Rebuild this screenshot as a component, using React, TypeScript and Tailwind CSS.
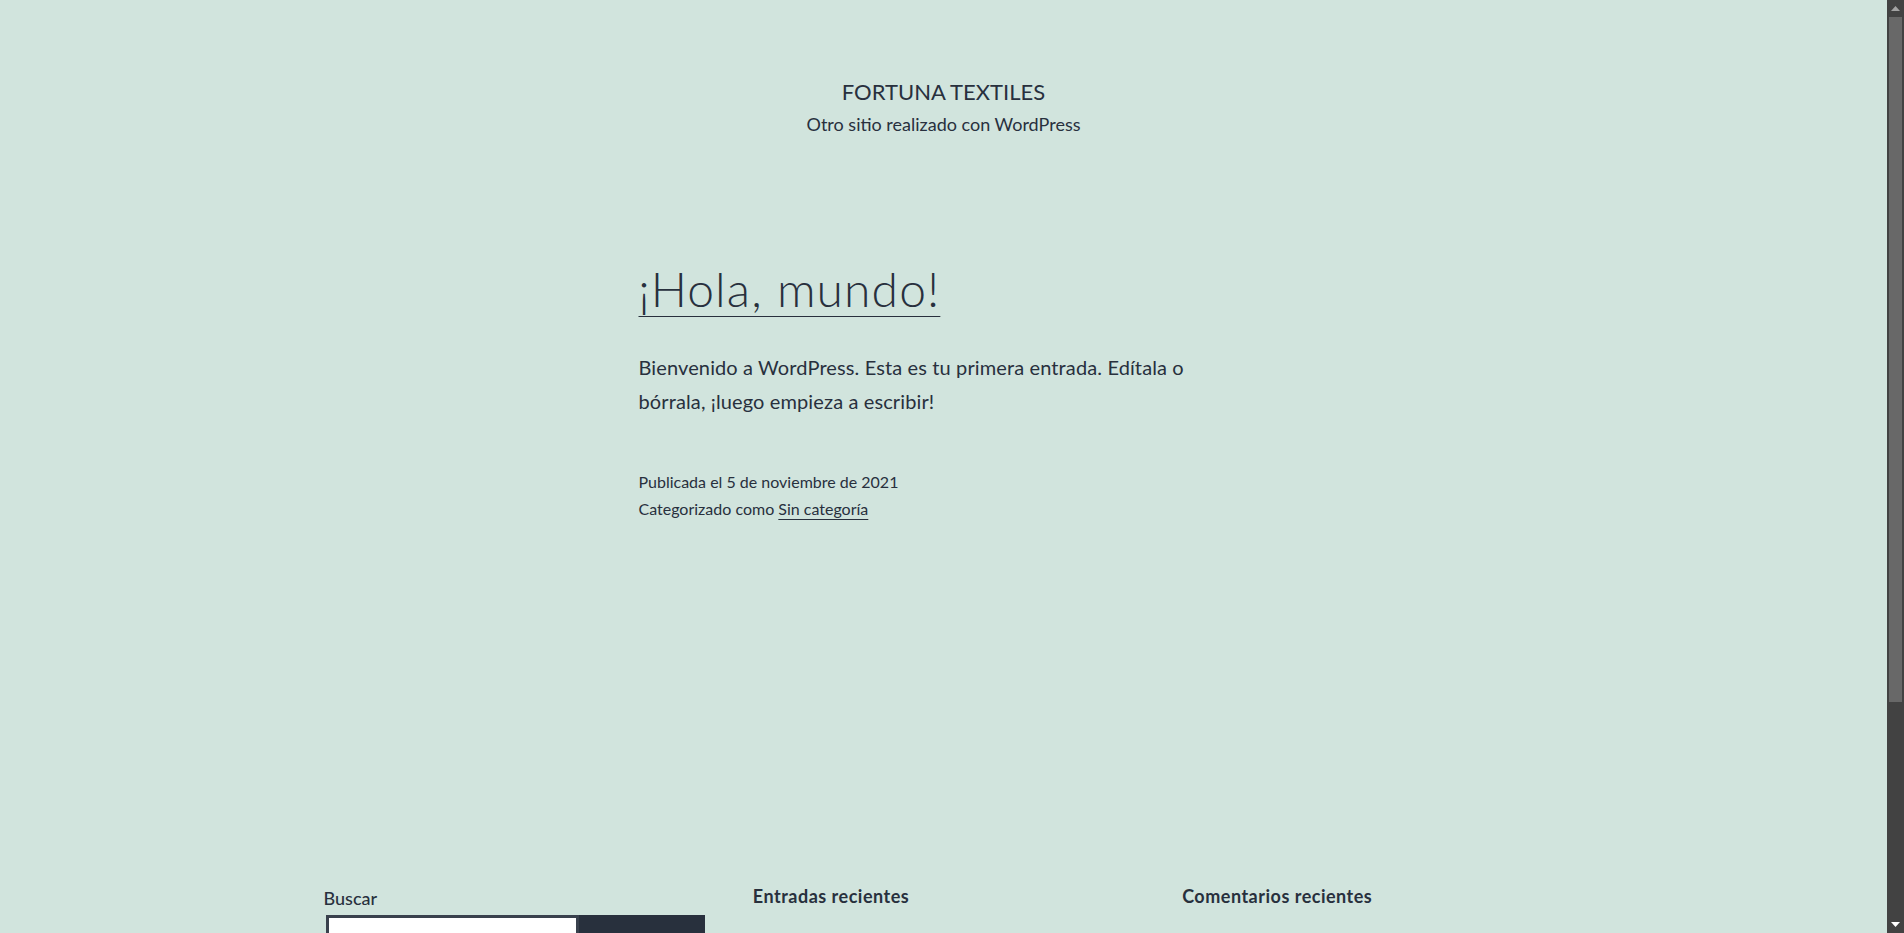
import type { ReactNode } from 'react'

const font = { fontFamily: 'Lato, "Noto Sans", sans-serif' }

function Scrollbar() {
  return (
    <div className="w-[17px] h-full flex flex-col bg-[#424242] shrink-0">
      <div className="h-[17px] flex items-center justify-center">
        <svg width="9" height="5" viewBox="0 0 9 5">
          <polygon points="0,5 4.5,0 9,5" fill="#a3a3a3" />
        </svg>
      </div>
      <div className="flex-1 px-[2px]">
        <div className="h-[685px] bg-[#686868]"></div>
      </div>
      <div className="h-[17px] flex items-center justify-center">
        <svg width="9" height="5" viewBox="0 0 9 5">
          <polygon points="0,0 9,0 4.5,5" fill="#ffffff" />
        </svg>
      </div>
    </div>
  )
}

function WidgetTitle({ children }: { children: ReactNode }) {
  return (
    <h2 className="text-[18px] leading-[26px] font-bold tracking-[0.5px]">
      {children}
    </h2>
  )
}

export default function App() {
  return (
    <div
      className="h-[933px] flex overflow-hidden bg-[#d1e4dd] text-[#28303d]"
      style={font}
    >
      <div className="flex-1 flex flex-col items-center">
        {/* Header */}
        <header className="pt-[77px] text-center">
          <p className="text-[22px] leading-[30px] uppercase">Fortuna Textiles</p>
          <p className="mt-[4px] text-[18px] leading-[26px]">
            Otro sitio realizado con WordPress
          </p>
        </header>

        {/* Post */}
        <article className="w-[610px] mt-[123px]">
          <h1 className="text-[48px] leading-[58px] font-light tracking-[1.1px]">
            <a
              href="#"
              className="underline decoration-1 underline-offset-[9px]"
            >
              ¡Hola, mundo!
            </a>
          </h1>
          <p className="mt-[32px] text-[20px] leading-[34px] tracking-[0.12px]">
            Bienvenido a WordPress. Esta es tu primera entrada. Edítala o
            bórrala, ¡luego empieza a escribir!
          </p>
          <div className="mt-[50px] text-[16px] leading-[27px]">
            <p>Publicada el 5 de noviembre de 2021</p>
            <p>
              Categorizado como{' '}
              <a href="#" className="underline decoration-1 underline-offset-[4px]">
                Sin categoría
              </a>
            </p>
          </div>
        </article>

        {/* Widgets */}
        <div className="w-[1240px] mt-[361px] grid grid-cols-3 gap-x-12">
          <div className="pt-[2px]">
            <label className="block text-[18px] leading-[26px] font-medium">Buscar</label>
            <div className="mt-[4px] flex">
              <input
                type="search"
                className="flex-1 h-[60px] bg-white border-[3px] border-[#39414d] ml-[2px] outline-none"
              />
              <button
                aria-label="Buscar"
                className="w-[126px] h-[60px] bg-[#28303d]"
              ></button>
            </div>
          </div>
          <div>
            <WidgetTitle>Entradas recientes</WidgetTitle>
          </div>
          <div>
            <WidgetTitle>Comentarios recientes</WidgetTitle>
          </div>
        </div>
      </div>
      <Scrollbar />
    </div>
  )
}
